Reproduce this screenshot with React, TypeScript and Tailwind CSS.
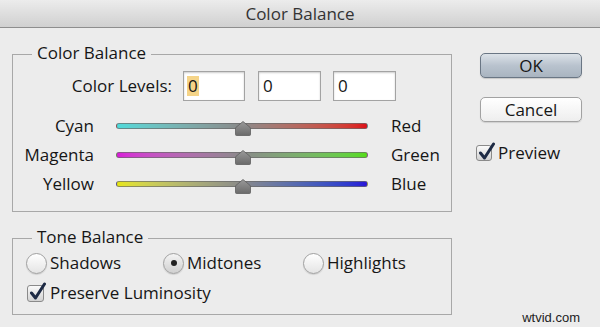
import React from "react";

function Thumb() {
  return (
    <svg
      className="absolute left-[118px] top-[-3px]"
      width="16"
      height="15"
      viewBox="0 0 16 15"
    >
      <defs>
        <linearGradient id="tg" x1="0" y1="0" x2="0" y2="1">
          <stop offset="0" stopColor="#9a9a9a" />
          <stop offset="1" stopColor="#6a6a6a" />
        </linearGradient>
      </defs>
      <path
        d="M8 0.5 L15.2 6.5 Q15.5 6.8 15.5 7.3 L15.5 13.5 Q15.5 14.5 14.5 14.5 L1.5 14.5 Q0.5 14.5 0.5 13.5 L0.5 7.3 Q0.5 6.8 0.8 6.5 Z"
        fill="url(#tg)"
        stroke="#5e5e5e"
        strokeWidth="0.8"
      />
    </svg>
  );
}

function SliderRow({
  left,
  right,
  track,
}: {
  left: string;
  right: string;
  track: string;
}) {
  return (
    <div className="flex h-[29px] items-center">
      <div className="w-[81px] text-right">{left}</div>
      <div
        className={`relative ml-[22px] h-[6px] w-[252px] rounded-full border border-[#6a6a6a]/70 ${track}`}
      >
        <Thumb />
      </div>
      <div className="ml-[23px]">{right}</div>
    </div>
  );
}

function CheckBox({ size = 17 }: { size?: number }) {
  return (
    <div
      className="relative shrink-0 rounded-[3px] border border-[#8a8a8a] bg-linear-to-b from-[#fafafa] to-[#d2d2d2]"
      style={{ width: size, height: size }}
    >
      <svg
        className="absolute left-[1px] top-[-4px]"
        width="18"
        height="20"
        viewBox="0 0 18 20"
      >
        <path
          d="M2.5 11 L6.5 16 L15.5 2"
          fill="none"
          stroke="#1d2a44"
          strokeWidth="3"
          strokeLinecap="round"
          strokeLinejoin="round"
        />
      </svg>
    </div>
  );
}

function Radio({ checked }: { checked?: boolean }) {
  return (
    <div
      className={`flex h-[21px] w-[21px] shrink-0 items-center justify-center rounded-full border border-[#a0a0a0] shadow-[0_1px_1px_rgba(0,0,0,0.12)] ${
        checked
          ? "bg-linear-to-b from-[#f4f4f4] to-[#d0d0d0]"
          : "bg-linear-to-b from-[#ffffff] to-[#e4e4e4]"
      }`}
    >
      {checked && <div className="h-[6px] w-[6px] rounded-full bg-[#222]" />}
    </div>
  );
}

function Input({ value, sel }: { value: string; sel?: boolean }) {
  return (
    <div className="flex h-[30px] items-center border border-[#a3a3a3] bg-white pl-[3px] shadow-[inset_0_1px_2px_rgba(0,0,0,0.2)]">
      {sel ? (
        <span className="bg-[#f5d488] px-[1px] leading-[20px]">{value}</span>
      ) : (
        <span className="pl-[1px] leading-[20px]">{value}</span>
      )}
    </div>
  );
}

export default function App() {
  return (
    <div className="relative h-[327px] w-[600px] overflow-hidden bg-[#ececec] font-['Open_Sans',sans-serif] text-[17px] text-[#161616]">
      <div className="flex h-[28px] items-center justify-center border-b border-[#8e8e8e] bg-linear-to-b from-[#ececec] to-[#d0d0d0] text-[17px] text-[#333]">
        Color Balance
      </div>
      <div className="flex">
        <div className="ml-[12px] w-[440px]">
          <div className="relative mt-[26px] h-[158px] border border-[#a8a8a8]">
            <div className="absolute left-[19px] top-[-13px] bg-[#ececec] px-[5px] leading-[22px]">
              Color Balance
            </div>
            <div className="flex items-center pt-[16px]">
              <div className="w-[159px] text-right">Color Levels:</div>
              <div className="ml-[11px] w-[62px]">
                <Input value="0" sel />
              </div>
              <div className="ml-[13px] w-[63px]">
                <Input value="0" />
              </div>
              <div className="ml-[12px] w-[63px]">
                <Input value="0" />
              </div>
            </div>
            <div className="mt-[10px]">
              <SliderRow
                left="Cyan"
                right="Red"
                track="bg-linear-to-r from-[#4fdada] via-[#8a8a8a] to-[#de0a18]"
              />
              <SliderRow
                left="Magenta"
                right="Green"
                track="bg-linear-to-r from-[#d81ad8] via-[#8a8a8a] to-[#55dc14]"
              />
              <SliderRow
                left="Yellow"
                right="Blue"
                track="bg-linear-to-r from-[#e6e60c] via-[#8a8a8a] to-[#2a10d8]"
              />
            </div>
          </div>
          <div className="relative mt-[26px] h-[77px] border border-[#a8a8a8]">
            <div className="absolute left-[19px] top-[-13px] bg-[#ececec] px-[5px] leading-[22px]">
              Tone Balance
            </div>
            <div className="mt-[12px] flex h-[24px] items-center pl-[13px]">
              <div className="flex w-[137px] items-center">
                <Radio />
                <span className="ml-[3px]">Shadows</span>
              </div>
              <div className="flex w-[140px] items-center">
                <Radio checked />
                <span className="ml-[3px]">Midtones</span>
              </div>
              <div className="flex items-center">
                <Radio />
                <span className="ml-[3px]">Highlights</span>
              </div>
            </div>
            <div className="mt-[6px] flex h-[24px] items-center pl-[14px]">
              <CheckBox />
              <span className="ml-[6px]">Preserve Luminosity</span>
            </div>
          </div>
        </div>
        <div className="ml-[28px] w-[102px]">
          <div className="mt-[25px] flex h-[25px] items-center justify-center rounded-[5px] border border-[#6a7684] bg-linear-to-b from-[#dce2e8] via-[#b9c3ce] to-[#a9b4c0] shadow-[0_1px_1px_rgba(0,0,0,0.15)]">
            OK
          </div>
          <div className="mt-[19px] flex h-[25px] items-center justify-center rounded-[5px] border border-[#a2a2a2] bg-linear-to-b from-[#ffffff] to-[#eeeeee] shadow-[0_1px_1px_rgba(0,0,0,0.12)]">
            Cancel
          </div>
          <div className="-ml-[4px] mt-[21px] flex h-[20px] items-center">
            <CheckBox size={16} />
            <span className="ml-[6px]">Preview</span>
          </div>
        </div>
      </div>
      <div className="absolute bottom-[2px] right-[20px] font-['Liberation_Sans',sans-serif] text-[13px] leading-[15px] text-[#222]">
        wtvid.com
      </div>
    </div>
  );
}
